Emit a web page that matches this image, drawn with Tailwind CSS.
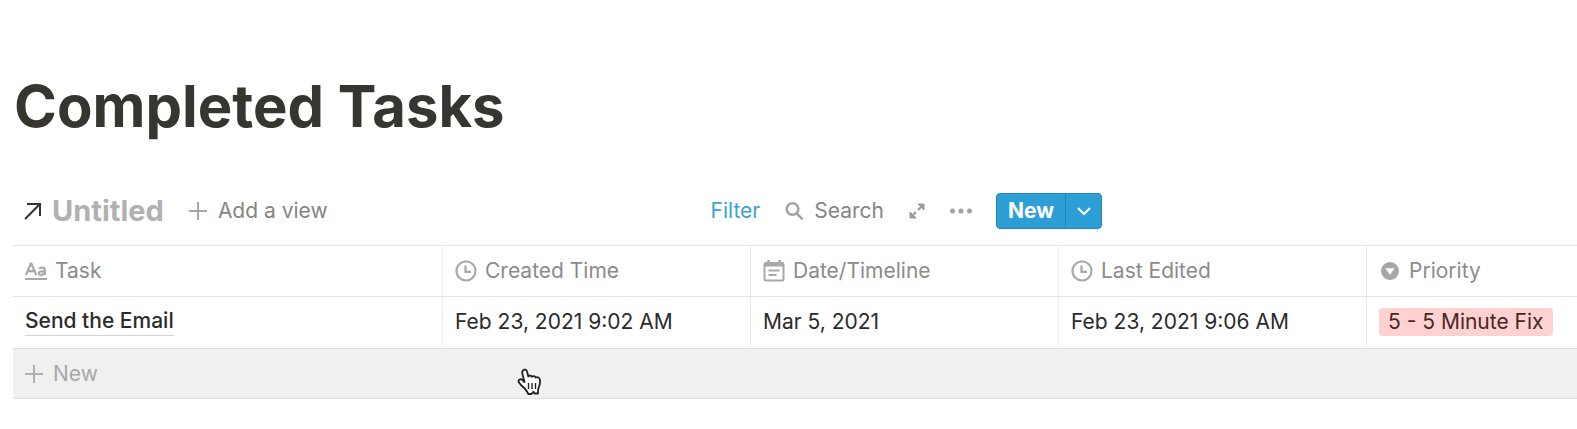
<!DOCTYPE html>
<html lang="en">

<head>
<meta charset="UTF-8">
<meta name="viewport" content="width=device-width, initial-scale=1.0">
<title>Completed Tasks</title>
<script src="https://cdn.jsdelivr.net/npm/@tailwindcss/browser@4"></script>
</head>

<body class="bg-white font-['Inter',sans-serif] text-[21px] leading-7 text-[#2f2e2b] overflow-x-hidden">
	<main class="relative pt-[70px]">
		<h1 class="pl-[14px] text-[58px] leading-[72px] font-bold text-[#37352f]">Completed Tasks</h1>

		<!-- Toolbar -->
		<div class="mt-[51px] flex max-w-[1102px] items-center justify-between pl-6 text-[#858585]">
			<div class="flex items-center">
				<svg class="size-[18px]" viewBox="0 0 18 18" fill="none" stroke="#37352f" stroke-width="2"><path d="M1 17 16 2M3 2h13v12"/></svg>
				<h2 class="ml-[10px] text-[29px] leading-9 font-bold text-[#b1b1b1]">Untitled</h2>
				<button type="button" class="ml-6 flex items-center gap-[10px]">
					<svg class="size-5" viewBox="0 0 20 20" fill="none" stroke="#a6a6a6" stroke-width="2"><path d="M10 1v18M1 10h18"/></svg>
					Add a view
				</button>
			</div>
			<div class="flex items-center">
				<button type="button" class="text-[#3ba3d0]">Filter</button>
				<button type="button" class="ml-6 flex items-center gap-[10px]">
					<svg class="size-5" viewBox="0 0 20 20" fill="none" stroke="#a3a3a3" stroke-width="2.6"><circle cx="8.500" cy="8" r="5.800"/><path d="m12.600 12.400 6 6"/></svg>
					Search
				</button>
				<button type="button" aria-label="Open as page" class="ml-6">
					<svg class="block size-[18px]" viewBox="0 0 18 18" fill="none" stroke="#9a9a9a" stroke-width="2.200"><path d="m4 14 4-4M10 8l4-4"/><path d="M10 2h6v6zM2 10v6h6z" fill="#9a9a9a" stroke-width="1"/></svg>
				</button>
				<button type="button" aria-label="More" class="ml-6">
					<svg class="block h-[6px] w-[22px]" viewBox="0 0 22 6" fill="#a3a3a3"><circle cx="2.500" cy="3" r="2.500"/><circle cx="11" cy="3" r="2.500"/><circle cx="19.500" cy="3" r="2.500"/></svg>
				</button>
				<div class="ml-6 flex h-9 overflow-hidden rounded border border-[#2489b8] bg-[#2e9fd6] text-white">
					<button type="button" class="px-[11px] font-bold">New</button>
					<button type="button" aria-label="More templates" class="flex w-9 items-center justify-center border-l border-[#2489b8]">
						<svg class="h-2 w-[14px]" viewBox="0 0 14 8" fill="none" stroke="currentColor" stroke-width="2"><path d="m1 1 6 6 6-6"/></svg>
					</button>
				</div>
			</div>
		</div>

		<!-- Tasks -->
		<div class="mt-4 ml-[13px]">
			<table class="w-full table-fixed border-collapse text-left">
				<colgroup>
					<col class="w-[430px]">
					<col class="w-[308px]">
					<col class="w-[308px]">
					<col class="w-[308px]">
					<col>
				</colgroup>
				<thead>
					<tr class="h-[51px] border-y border-[#e3e3e3] text-[#8b8b8b]">
						<th class="p-0 font-normal">
							<div class="flex h-[50px] items-center gap-2 border-r border-[#ececec] pl-3">
								<svg class="h-[18px] w-[22px]" viewBox="0 0 22 18" fill="none" stroke="#a9a9a9" stroke-width="2.200"><path d="M1 13 5.800 1.500h.6L11.200 13M2.800 9.200h6.600M14 6.800c1.500-1.700 5.800-1.600 5.800 1.200v5M19.800 9.200c-3.200 0-6 .2-6 2.100 0 2.500 5.400 2.100 6-1"/><path d="M0 17h22" stroke-width="2"/></svg>
								Task
							</div>
						</th>
						<th class="p-0 font-normal">
							<div class="flex h-[50px] items-center gap-2 border-r border-[#ececec] pl-3">
								<svg class="size-[22px]" viewBox="0 0 22 22" fill="none" stroke="#a9a9a9" stroke-width="2.200"><circle cx="11" cy="11" r="9.500"/><path d="M10.500 5.500v6.300H16"/></svg>
								Created Time
							</div>
						</th>
						<th class="p-0 font-normal">
							<div class="flex h-[50px] items-center gap-2 border-r border-[#ececec] pl-3">
								<svg class="size-[22px]" viewBox="0 0 22 22" fill="none" stroke="#a9a9a9" stroke-width="2"><rect x="1.500" y="3" width="19" height="17.500" rx="1.500"/><path d="M1 4.500h20" stroke-width="4"/><path d="M5.500 0v4M16.500 0v4" stroke-width="2.500"/><path d="M5.500 10.500h11M5.500 15h8"/></svg>
								Date/Timeline
							</div>
						</th>
						<th class="p-0 font-normal">
							<div class="flex h-[50px] items-center gap-2 border-r border-[#ececec] pl-3">
								<svg class="size-[22px]" viewBox="0 0 22 22" fill="none" stroke="#a9a9a9" stroke-width="2.200"><circle cx="11" cy="11" r="9.500"/><path d="M10.500 5.500v6.300H16"/></svg>
								Last Edited
							</div>
						</th>
						<th class="p-0 font-normal">
							<div class="flex h-[50px] items-center gap-[10px] pl-[14px]">
								<svg class="size-[18px]" viewBox="0 0 18 18"><circle cx="9" cy="9" r="9" fill="#a6a6a6"/><path d="M4.200 6.300h9.600L9 12.800z" fill="#fff"/></svg>
								Priority
							</div>
						</th>
					</tr>
				</thead>
				<tbody class="text-[#2b2b2b]">
					<tr class="h-[52px] border-b border-[#dfdfdf]">
						<td class="p-0 align-top">
							<div class="flex h-[49px] items-center border-r border-[#ececec] pl-3">
								<a href="#" class="border-b border-[#d5d5d5] font-medium leading-7">Send the Email</a>
							</div>
						</td>
						<td class="p-0 align-top"><div class="flex h-[49px] items-center border-r border-[#ececec] pl-3">Feb 23, 2021 9:02 AM</div></td>
						<td class="p-0 align-top"><div class="flex h-[49px] items-center border-r border-[#ececec] pl-3">Mar 5, 2021</div></td>
						<td class="p-0 align-top"><div class="flex h-[49px] items-center border-r border-[#ececec] pl-3">Feb 23, 2021 9:06 AM</div></td>
						<td class="p-0 align-top">
							<div class="flex h-[49px] items-center pl-3">
								<span class="rounded bg-[#ffd2d1] px-[9px] leading-7 whitespace-nowrap text-[#4a2526]">5 - 5 Minute Fix</span>
							</div>
						</td>
					</tr>
				</tbody>
			</table>
			<button type="button" class="flex h-[50px] w-full items-center gap-[10px] border-b border-[#dfdfdf] bg-[#f0f0f0] pl-3 text-[#a8a8a8]">
				<svg class="size-[18px]" viewBox="0 0 18 18" fill="none" stroke="#b0b0b0" stroke-width="2"><path d="M9 0v18M0 9h18"/></svg>
				New
			</button>
		</div>

		<!-- Pointer -->
		<svg class="pointer-events-none absolute top-[368px] left-[517px] h-[28px] w-[25px]" viewBox="0 0 25 28"><path d="M6 2.500C7.500.8 9.600 1.800 10 3.500l1.300 5c.9-1.500 3-1.200 3.700.3 1-1.200 3-.8 3.700.8 1.600-1.100 4 .1 4.300 2.400.4 3.500-.4 6-1.600 8.500-.6 1.500-.5 3-.4 5h-3.500l-1.200-1.800-1.800 2.300h-3.200l-1.300-2.500C8.600 20.700 6.500 19 4.500 17.500 3 16 1.500 14.500 1.500 13c.3-2 2.500-2.200 4-1l2 2L5.300 5.500c-.3-1-.1-2.200.7-3Z" fill="#fff" stroke="#222" stroke-width="1.800" stroke-linejoin="round"/><path d="M11.500 15v6M15 15v6M18.500 15v6" stroke="#222" stroke-width="1.400"/></svg>
	</main>
</body>

</html>
